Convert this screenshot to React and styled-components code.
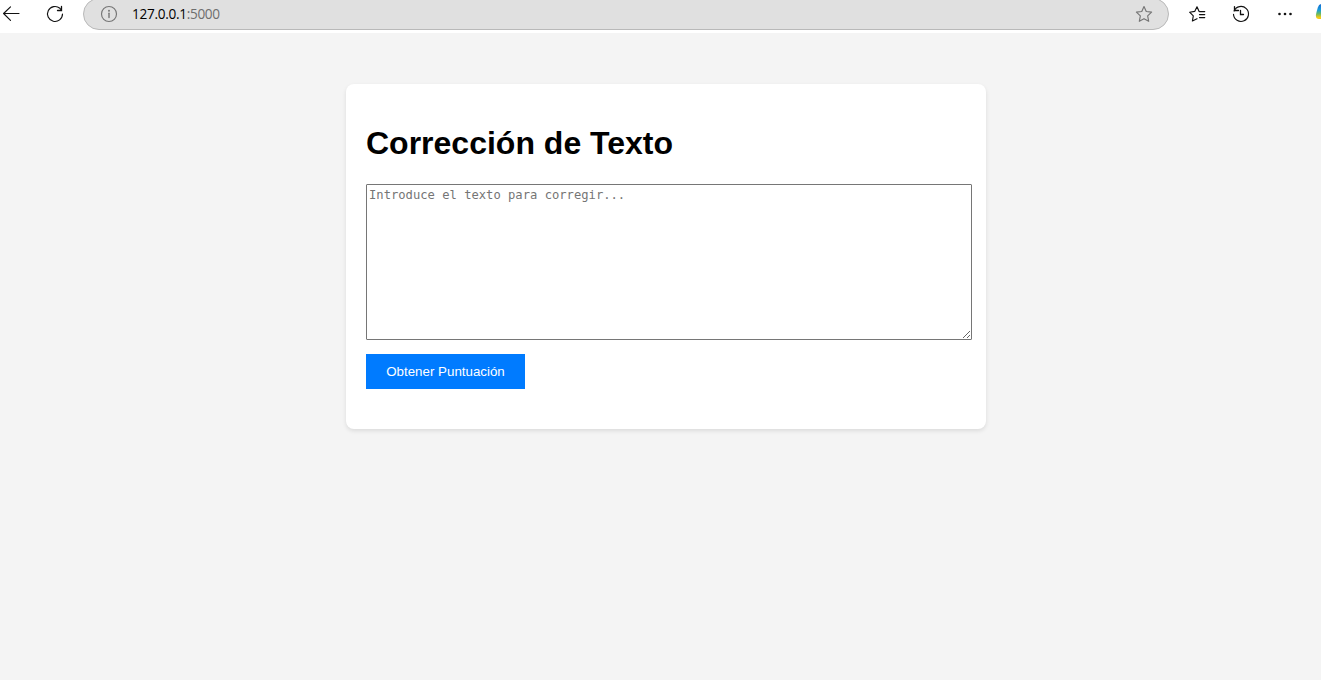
import React from "react";
import styled, { createGlobalStyle } from "styled-components";

const GlobalStyle = createGlobalStyle`
  body {
    margin: 0;
    background: #f4f4f4;
    font-family: Arial, "Liberation Sans", sans-serif;
    overflow: hidden;
  }
`;

const Page = styled.div`
  display: flex;
  flex-direction: column;
  height: 680px;
  overflow: hidden;
`;

const Toolbar = styled.header`
  box-sizing: border-box;
  flex: none;
  display: flex;
  align-items: flex-end;
  height: 33px;
  padding-bottom: 3px;
  background: #fff;
  overflow: hidden;
`;

const IconSlot = styled.span`
  flex: none;
  display: flex;
  align-items: center;
  justify-content: center;
  width: ${(p) => p.$width || 44}px;
  height: 32px;
  color: ${(p) => p.$color || "#111"};

  svg {
    display: block;
    overflow: visible;
    fill: none;
    stroke: currentColor;
    stroke-width: 1.15;
    stroke-linecap: round;
    stroke-linejoin: round;
  }
`;

const NavButtons = styled.div`
  display: flex;
  width: 83px;
  margin-left: -11px;
  margin-right: 11px;
`;

const AddressBar = styled.div`
  box-sizing: border-box;
  flex: none;
  display: flex;
  align-items: center;
  width: 1086px;
  height: 32px;
  padding: 0 2px 0 3px;
  border: 1px solid #b9b9b9;
  border-radius: 16px;
  background: #e0e0e0;
`;

const Url = styled.span`
  flex: 1;
  margin-left: 1px;
  font: 13.6px/20px "Segoe UI", "Open Sans", sans-serif;
  letter-spacing: -0.3px;
  color: #6e6e6e;
`;

const Host = styled.span`
  color: #000;
`;

const Main = styled.main`
  flex: 1;
  padding-top: 51px;
  padding-left: 11px;
`;

const Card = styled.section`
  width: 600px;
  margin: 0 auto;
  padding: 20px;
  background: #fff;
  border-radius: 8px;
  box-shadow: 0 2px 4px rgba(0, 0, 0, 0.1);
`;

const Title = styled.h1`
  margin: 21px 0 22px;
  font-size: 32px;
  line-height: 37px;
  color: #000;
`;

const TextInput = styled.textarea`
  display: block;
  box-sizing: content-box;
  width: 100%;
  height: 150px;
  margin: 0 0 14px;
  padding: 2px;
  border: 1px solid #767676;
  border-radius: 1px;
  font: 12.17px/16px Consolas, "DejaVu Sans Mono", monospace;

  &::placeholder {
    color: #757575;
  }
`;

const SubmitButton = styled.button`
  display: block;
  width: 159px;
  height: 35px;
  margin: 0 0 20px;
  padding: 0;
  border: 0;
  background: #007bff;
  color: #fff;
  font: 13.333px Arial, "Liberation Sans", sans-serif;
`;

const BackIcon = () => (
  <svg width="16" height="16">
    <path d="M16 7.5H.5M7.5 .8L.6 7.5l6.9 6.9" />
  </svg>
);

const ReloadIcon = () => (
  <svg width="16" height="16">
    <path d="M15.5 8a7.5 7.5 0 1 1-2.6-5.7L14.4 4" />
    <path d="M14.5 .5v4h-4" strokeWidth="1.3" strokeLinejoin="miter" />
  </svg>
);

const InfoIcon = () => (
  <svg width="16" height="16">
    <circle cx="8" cy="8" r="7.5" />
    <path d="M8 7.2v4.3" strokeWidth="1.4" />
    <circle cx="8" cy="4.8" r=".4" fill="currentColor" />
  </svg>
);

const StarIcon = () => (
  <svg width="16" height="16">
    <path d="M8 .5l2.25 5 5.35.65-3.95 3.7 1.05 5.45L8 12.65 3.3 15.3l1.05-5.45L.4 6.15l5.35-.65z" />
  </svg>
);

const FavoritesIcon = () => (
  <svg width="16" height="16">
    <path d="M10 5.3L8 .8l-2.3 4.6-5.1.8 3.7 3.6-.9 5.2L8 12.7" />
    <path d="M10.5 5.5h5.2M10.5 8.5h5.2M10.5 11.5h5.2" strokeWidth="1.25" />
  </svg>
);

const HistoryIcon = () => (
  <svg width="16" height="16">
    <path d="M1.1 5A7.5 7.5 0 1 1 .5 8.3" />
    <path d="M1.5 .6v3.9h4M7.5 4.5v4h3" strokeWidth="1.3" strokeLinejoin="miter" />
  </svg>
);

const MoreIcon = () => (
  <svg width="16" height="16">
    {[2.5, 8, 13.5].map((x) => (
      <circle key={x} cx={x} cy="8" r="1.3" fill="currentColor" stroke="none" />
    ))}
  </svg>
);

const CopilotIcon = () => (
  <svg width="20" height="20">
    <defs>
      <linearGradient id="copilot" x1="0" y1="0" x2="0" y2="1">
        <stop offset="0" stopColor="#1769d0" />
        <stop offset=".4" stopColor="#169ddd" />
        <stop offset=".65" stopColor="#65b866" />
        <stop offset=".9" stopColor="#f3cb16" />
      </linearGradient>
    </defs>
    <path d="M6 0Q3 0 1.8 3.5L.3 9Q-1.2 15 3 15h8V0z" fill="url(#copilot)" stroke="none" />
  </svg>
);

export default function App() {
  return (
    <Page>
      <GlobalStyle />
      <Toolbar>
        <NavButtons>
          <IconSlot><BackIcon /></IconSlot>
          <IconSlot><ReloadIcon /></IconSlot>
        </NavButtons>
        <AddressBar>
          <IconSlot $color="#757575"><InfoIcon /></IconSlot>
          <Url><Host>127.0.0.1</Host>:5000</Url>
          <IconSlot $color="#757575"><StarIcon /></IconSlot>
        </AddressBar>
        <IconSlot $width={56}><FavoritesIcon /></IconSlot>
        <IconSlot $width={32}><HistoryIcon /></IconSlot>
        <IconSlot $width={56}><MoreIcon /></IconSlot>
        <IconSlot $width={26}><CopilotIcon /></IconSlot>
      </Toolbar>
      <Main>
        <Card>
          <Title>Corrección de Texto</Title>
          <TextInput placeholder="Introduce el texto para corregir..." />
          <SubmitButton>Obtener Puntuación</SubmitButton>
        </Card>
      </Main>
    </Page>
  );
}
